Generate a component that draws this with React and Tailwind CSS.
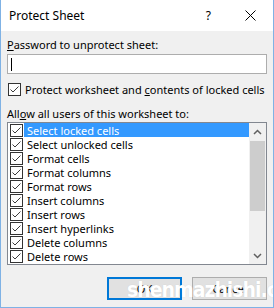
import React, { useState } from "react";

const items = [
  "Select locked cells",
  "Select unlocked cells",
  "Format cells",
  "Format columns",
  "Format rows",
  "Insert columns",
  "Insert rows",
  "Insert hyperlinks",
  "Delete columns",
  "Delete rows",
];

const CheckBox = ({ checked = true }) => (
  <span className="flex h-[13px] w-[13px] shrink-0 items-center justify-center border border-[#333333] bg-white">
    {checked && (
      <svg width="11" height="11" viewBox="0 0 11 11">
        <path d="M1.5 5.5 L4 8 L9.5 2.5" fill="none" stroke="#3c3c3c" strokeWidth="1" />
      </svg>
    )}
  </span>
);

const Chevron = ({ up }) => (
  <svg width="9" height="6" viewBox="0 0 9 6">
    <path
      d={up ? "M1 5 L4.5 1.5 L8 5" : "M1 1 L4.5 4.5 L8 1"}
      fill="none"
      stroke="#606060"
      strokeWidth="1.5"
    />
  </svg>
);

const App = () => {
  const [selected, setSelected] = useState(0);

  return (
    <div
      className="relative flex h-[308px] w-[274px] flex-col overflow-hidden border-x border-b border-[#7fb2e5] text-[11px] leading-[15px] text-black"
      style={{ fontFamily: '"Noto Sans", "Liberation Sans", sans-serif' }}
    >
      {/* Title bar */}
      <div className="flex h-[31px] shrink-0 items-center bg-white">
        <span className="ml-[8px] text-[12px]">Protect Sheet</span>
        <span className="ml-auto mr-[34px] text-[12px]">?</span>
        <svg className="mr-[17px]" width="11" height="11" viewBox="0 0 11 11">
          <path d="M0.5 0.5 L10.5 10.5 M10.5 0.5 L0.5 10.5" stroke="#000" strokeWidth="1" />
        </svg>
      </div>

      {/* Body */}
      <div className="flex flex-1 flex-col bg-[#f0f0f0] px-[6px] pt-[6px]">
        <div className="whitespace-nowrap">
          <span className="underline">P</span>assword to unprotect sheet:
        </div>
        <div className="mt-[2px] flex h-[20px] w-[260px] items-center border border-[#adadad] bg-white pl-[3px]">
          <span className="h-[13px] w-[1px] bg-black" />
        </div>

        <div className="mt-[9px] flex h-[13px] items-center whitespace-nowrap">
          <span className="ml-[1px]">
            <CheckBox />
          </span>
          <span className="ml-[4px]">
            Protect worksheet and <span className="underline">c</span>ontents of locked cells
          </span>
        </div>

        <div className="mt-[10px] whitespace-nowrap">
          All<span className="underline">o</span>w all users of this worksheet to:
        </div>

        <div className="mt-[1px] flex h-[143px] w-[260px] border border-[#828790] bg-white">
          <div className="flex flex-1 flex-col">
            {items.map((item, i) => (
              <div key={item} className="flex h-[14px] items-center" onClick={() => setSelected(i)}>
                <span className="ml-[2px]">
                  <CheckBox />
                </span>
                <span
                  className={
                    "ml-[1px] flex h-[14px] flex-1 items-center whitespace-nowrap pl-[3px] " +
                    (selected === i ? "bg-[#3399ff] text-white" : "")
                  }
                >
                  {item}
                </span>
              </div>
            ))}
          </div>
          <div className="flex w-[17px] flex-col bg-[#f0f0f0]">
            <div className="flex h-[17px] items-center justify-center">
              <Chevron up />
            </div>
            <div className="mx-[1px] mt-[1px] h-[70px] bg-[#cdcdcd]" />
            <div className="flex-1" />
            <div className="flex h-[17px] items-center justify-center">
              <Chevron />
            </div>
          </div>
        </div>

        <div className="mt-[12px] flex w-[260px] justify-end gap-[10px]">
          <button className="h-[23px] w-[75px] border-2 border-[#0078d7] bg-[#e1e1e1] text-[11px]">OK</button>
          <button className="h-[23px] w-[75px] border border-[#adadad] bg-[#e1e1e1] text-[11px]">Cancel</button>
        </div>
      </div>

      {/* watermark */}
      <div
        className="pointer-events-none absolute left-[126px] top-[277px] whitespace-nowrap text-[21px] font-bold leading-[26px] tracking-[-1px] text-white"
        style={{
          fontFamily: '"DejaVu Sans Condensed", "Liberation Sans Narrow", "Liberation Sans", sans-serif',
          fontStretch: "condensed",
          textShadow: "0 0 1px rgba(0,0,0,0.12)",
        }}
      >
        shenmazhishi.com
      </div>
    </div>
  );
};

export default App;
